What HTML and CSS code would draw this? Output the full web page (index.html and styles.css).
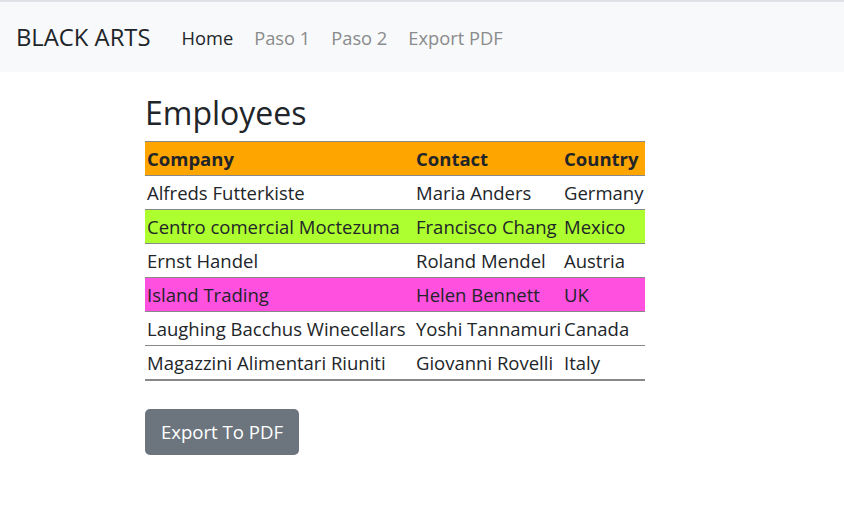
FILE: index.html
```html
<!DOCTYPE html>
<html>
<head>
<meta charset="utf-8">
<link rel="stylesheet" href="styles.css">
</head>
<body>
<nav class="navbar">
  <span class="brand">BLACK ARTS</span>
  <ul class="nav">
    <li class="nav-link active">Home</li>
    <li class="nav-link">Paso 1</li>
    <li class="nav-link">Paso 2</li>
    <li class="nav-link">Export PDF</li>
  </ul>
</nav>
<main class="content">
  <h2 class="title">Employees</h2>
  <table class="emp">
    <colgroup><col class="c1"><col class="c2"><col class="c3"></colgroup>
    <thead>
      <tr class="head"><th>Company</th><th>Contact</th><th>Country</th></tr>
    </thead>
    <tbody>
      <tr><td>Alfreds Futterkiste</td><td>Maria Anders</td><td>Germany</td></tr>
      <tr class="green"><td>Centro comercial Moctezuma</td><td>Francisco Chang</td><td>Mexico</td></tr>
      <tr><td>Ernst Handel</td><td>Roland Mendel</td><td>Austria</td></tr>
      <tr class="pink"><td>Island Trading</td><td>Helen Bennett</td><td>UK</td></tr>
      <tr><td>Laughing Bacchus Winecellars</td><td>Yoshi Tannamuri</td><td>Canada</td></tr>
      <tr><td>Magazzini Alimentari Riuniti</td><td>Giovanni Rovelli</td><td>Italy</td></tr>
    </tbody>
  </table>
  <button class="btn">Export To PDF</button>
</main>
</body>
</html>
```
FILE: styles.css
```css
* { box-sizing: border-box; }
body {
  margin: 0;
  font-family: "Open Sans", "Noto Sans", sans-serif;
  color: #212529;
  background: #fff;
  border-top: 2px solid #dee2e6;
}
.navbar {
  display: flex;
  align-items: center;
  height: 70px;
  background: #f8f9fa;
  padding: 0 16px;
}
.brand {
  font-size: 23.8px;
  margin-right: 31px;
  color: #212529;
}
.nav {
  display: flex;
  list-style: none;
  margin: 0;
  padding: 0;
  gap: 21px;
}
.nav-link {
  font-size: 18.3px;
  color: #8a8b8c;
}
.nav-link.active { color: #212529; }
.content {
  margin-left: 145px;
  width: 500px;
  padding-top: 22px;
}
.title {
  font-size: 32px;
  font-weight: 500;
  margin: 0 0 9px 0;
  line-height: 38px;
}
.emp {
  width: 500px;
  border-collapse: collapse;
  table-layout: fixed;
  font-size: 18.5px;
}
.c1 { width: 269px; }
.c2 { width: 148px; }
.c3 { width: 83px; }
.emp th, .emp td {
  text-align: left;
  padding: 0 2px;
  height: 34px;
  white-space: nowrap;
  border-bottom: 1px solid #888;
}
.emp th { font-weight: 700; }
.head { background: #ffa500; border-top: 1px solid #888; }
.green { background: #adff2f; }
.pink { background: #ff50e0; }
.emp tbody tr:last-child td { border-bottom: 2px solid #888; }
.btn {
  margin-top: 28px;
  width: 154px;
  height: 46px;
  border: none;
  border-radius: 5px;
  background: #6c757d;
  color: #fff;
  font-family: inherit;
  font-size: 18.6px;
  padding: 0;
}
```
